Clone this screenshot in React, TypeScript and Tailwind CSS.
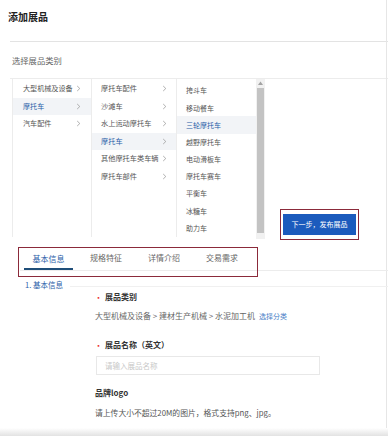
import React from "react";

const col1 = ["大型机械及设备", "摩托车", "汽车配件"];
const col2 = ["摩托车配件", "沙滩车", "水上运动摩托车", "摩托车", "其他摩托车类车辆", "摩托车部件"];
const col3 = ["挎斗车", "移动餐车", "三轮摩托车", "越野摩托车", "电动滑板车", "摩托车赛车", "平衡车", "冰糖车", "助力车"];

function Arrow() {
  return (
    <svg width="5" height="7" viewBox="0 0 5 7" className="shrink-0">
      <path d="M1.2 1 L3.8 3.5 L1.2 6" fill="none" stroke="#9a9a9a" strokeWidth="0.8" />
    </svg>
  );
}

export default function App() {
  return (
    <div
      className="w-[388px] h-[436px] bg-white overflow-hidden relative text-[#333]"
      style={{ fontFamily: '"Noto Sans CJK SC", "Noto Sans", sans-serif' }}
    >
      <div className="absolute right-[1px] top-0 h-[436px] w-px bg-[#e6e6e6]" />
      {/* Title */}
      <div className="h-[41px] pl-[8px] pt-[9px] text-[10px] font-bold leading-[16px] text-[#222]">添加展品</div>
      <div className="ml-[10px] h-px bg-[#e3e3e3]" />
      <div className="h-[36px] pl-[12px] flex items-center text-[8.3px] text-[#666]">选择展品类别</div>
      <div className="ml-[10px] h-px bg-[#ececec]" />

      {/* Category panel + button */}
      <div className="flex h-[168px]">
        <div className="ml-[12px] w-[79px] border-l border-[#ececec] pt-[1px] h-[158px]">
          {col1.map((t, i) => (
            <div
              key={t}
              className={`h-[17.5px] flex items-center justify-between pl-[10px] pr-[10px] text-[7.1px] ${
                i === 1 ? "bg-[#f2f4f7] text-[#2a5ea8]" : "text-[#555]"
              }`}
            >
              <span className="whitespace-nowrap">{t}</span>
              <Arrow />
            </div>
          ))}
        </div>
        <div className="w-[85px] border-l border-[#ececec] pt-[1px] h-[158px]">
          {col2.map((t, i) => (
            <div
              key={t + i}
              className={`h-[17.5px] flex items-center justify-between pl-[9px] pr-[9px] text-[7.2px] ${
                i === 3 ? "bg-[#f2f4f7] text-[#2a5ea8]" : "text-[#555]"
              }`}
            >
              <span className="whitespace-nowrap">{t}</span>
              <Arrow />
            </div>
          ))}
        </div>
        <div className="w-[80px] border-l border-[#ececec] pt-[3px] h-[158px]">
          {col3.map((t, i) => (
            <div
              key={t}
              className={`h-[17.2px] flex items-center pl-[9px] text-[7px] ${
                i === 2 ? "bg-[#f2f4f7] text-[#2a5ea8]" : "text-[#555]"
              }`}
            >
              {t}
            </div>
          ))}
        </div>
        <div className="w-[9px] h-[160px] bg-[#f1f1f1] flex flex-col items-center pt-[2px]">
          <svg width="5" height="4" viewBox="0 0 5 4">
            <path d="M0 4 L2.5 0.5 L5 4 Z" fill="#a3a3a3" />
          </svg>
          <div className="mt-[3px] w-[7px] h-[145px] bg-[#c3c3c3]" />
        </div>
        <div className="flex-1 flex flex-col justify-end items-start pl-[15px] pb-[7px]">
          <div className="border border-[#8b2a3a] px-[2px] pt-[4px] pb-[4px]">
            <div className="w-[73px] h-[21px] bg-[#1b5bbd] text-white text-[7px] flex items-center justify-center whitespace-nowrap">
              下一步，发布展品
            </div>
          </div>
        </div>
      </div>

      {/* Tabs */}
      <div className="relative h-[30px]">
        <div className="absolute left-[20px] right-0 top-[23px] h-px bg-[#ececec]" />
        <div className="absolute left-[18px] top-0 w-[240px] h-[30px] border border-[#8b2a3a]" />
        <div className="flex pl-[24px] pt-[1px] h-[23px] items-end text-[8px] text-[#666]">
          <div className="w-[49px] h-[22px] pt-[1px] flex items-center justify-center text-[#2a5ea8] border-b-[2px] border-[#1f4e79]">
            基本信息
          </div>
          <div className="pl-[4px] flex">
            <div className="w-[58px] text-center pb-[6px]">规格特征</div>
            <div className="w-[58px] text-center pb-[6px]">详情介绍</div>
            <div className="w-[58px] text-center pb-[6px]">交易需求</div>
          </div>
        </div>
      </div>

      {/* Form */}
      <div className="relative">
        <div className="absolute left-[70px] right-0 top-[7px] h-px bg-[#f0f0f0]" />
        <div className="h-[12px] mt-[2px] pl-[25px] text-[7.5px] leading-[12px] text-[#2a5ea8]">1. 基本信息</div>
        <div className="pl-[95px]">
          <div className="h-[12px] flex items-center text-[8px] font-bold text-[#333]">
            <span className="text-[#e33] mr-[3px] text-[7px]">•</span>展品类别
          </div>
          <div className="h-[12px] mt-[7px] flex items-center text-[8px] text-[#666] whitespace-nowrap">
            大型机械及设备 &gt; 建材生产机械 &gt; 水泥加工机
            <span className="ml-[4px] text-[7px] text-[#4a7fc7]">选择分类</span>
          </div>
          <div className="h-[12px] mt-[17px] flex items-center text-[8px] font-bold text-[#333]">
            <span className="text-[#e33] mr-[3px] text-[7px]">•</span>展品名称（英文）
          </div>
          <div className="mt-[5px] ml-[1px] w-[224px] h-[19px] border border-[#e8e8e8] flex items-center pl-[8px] text-[7.5px] text-[#c8c8c8]">
            请输入展品名称
          </div>
          <div className="h-[12px] mt-[12px] flex items-center text-[8px] font-bold text-[#333]">品牌logo</div>
          <div className="h-[12px] mt-[8px] flex items-center text-[7.8px] text-[#555] whitespace-nowrap">
            请上传大小不超过20M的图片，格式支持png、jpg。
          </div>
        </div>
      </div>
      <div className="absolute left-0 right-0 bottom-0 h-[8px] bg-gradient-to-b from-[#ffffff] to-[#e2e2e2]" />
    </div>
  );
}
